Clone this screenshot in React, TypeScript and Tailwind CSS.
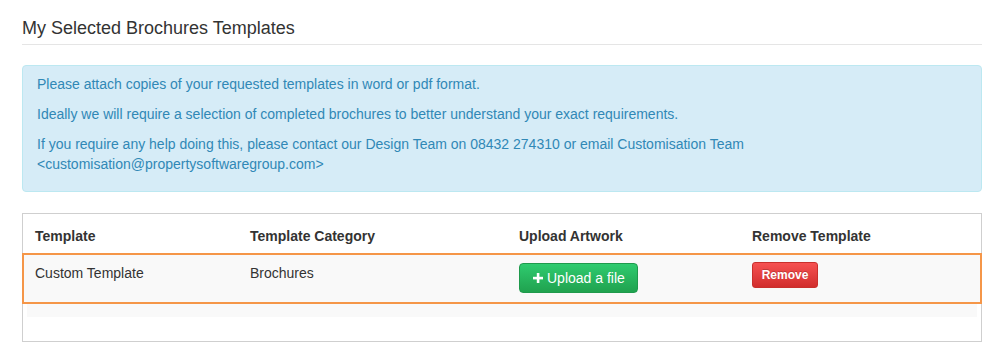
import React from "react";

function PlusIcon() {
  return (
    <svg width="10" height="10" viewBox="0 0 10 10" aria-hidden="true">
      <rect x="3.8" y="0" width="2.6" height="10" fill="#fff" />
      <rect x="0" y="3.8" width="10" height="2.6" fill="#fff" />
    </svg>
  );
}

export default function App() {
  return (
    <div
      className="w-full h-[358px] bg-white text-[#333] text-[14px] leading-[20px]"
      style={{ fontFamily: '"Liberation Sans", Arial, sans-serif' }}
    >
      <div className="ml-[22px] w-[960px]">
        <h3 className="pt-[18px] pb-[6px] text-[18px] leading-[20px] font-normal text-[#333] border-b border-[#e5e5e5]">
          My Selected Brochures Templates
        </h3>

        <div className="mt-[20px] h-[127px] rounded-[4px] border border-[#bce8f1] bg-[#d6ecf7] px-[14px] pt-[8px] text-[#3088b6] flex flex-col gap-[10px]">
          <p>Please attach copies of your requested templates in word or pdf format.</p>
          <p>Ideally we will require a selection of completed brochures to better understand your exact requirements.</p>
          <p>
            If you require any help doing this, please contact our Design Team on 08432 274310 or email Customisation Team
            <br />
            &lt;customisation@propertysoftwaregroup.com&gt;
          </p>
        </div>

        <div className="mt-[21px] h-[129px] border border-[#cfcfcf] px-[4px] pt-[4px]">
          <div className="grid grid-cols-[215px_269px_233px_1fr] font-bold text-[#333]">
            <div className="px-[8px] pt-[8px] pb-[7px]">Template</div>
            <div className="px-[8px] pt-[8px] pb-[7px]">Template Category</div>
            <div className="px-[8px] pt-[8px] pb-[7px]">Upload Artwork</div>
            <div className="px-[8px] pt-[8px] pb-[7px]">Remove Template</div>
          </div>

          <div className="-mx-[5px] h-[51px] border-2 border-[#f59648] bg-[#f9f9f9] px-[3px]">
            <div className="grid grid-cols-[215px_269px_233px_1fr]">
              <div className="px-[8px] pt-[8px]">Custom Template</div>
              <div className="px-[8px] pt-[8px]">Brochures</div>
              <div className="px-[8px] pt-[8px]">
                <button className="inline-flex h-[30px] items-center gap-[4px] rounded-[4px] border border-[#1f9a4c] bg-gradient-to-b from-[#2fcb6f] to-[#20a24f] pl-[13px] pr-[12px] text-[14px] text-white">
                  <PlusIcon />
                  <span>Upload a file</span>
                </button>
              </div>
              <div className="px-[8px] pt-[7px]">
                <button className="h-[26px] w-[66px] rounded-[3px] border border-[#c9302c] bg-gradient-to-b from-[#f65151] to-[#d22d2d] text-[12px] font-bold text-white [text-shadow:0_-1px_0_rgba(0,0,0,0.2)]">
                  Remove
                </button>
              </div>
            </div>
          </div>

          <div className="h-[13px] bg-[#f9f9f9]" />
        </div>
      </div>
    </div>
  );
}
